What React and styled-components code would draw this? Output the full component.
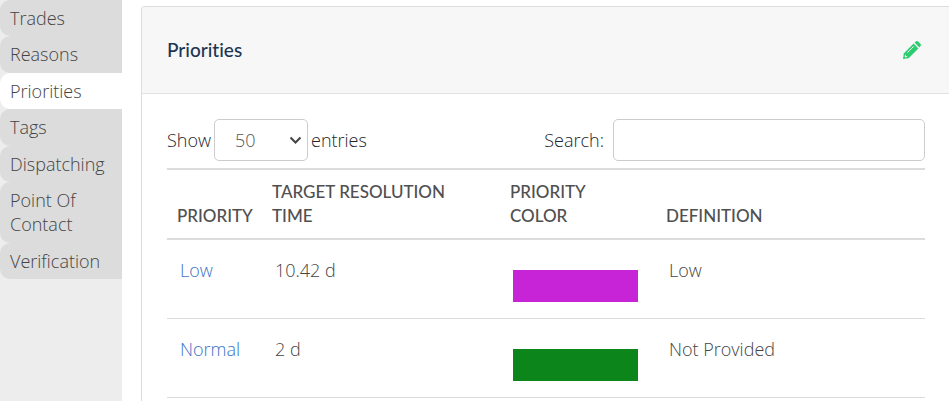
import React, {useState} from 'react';
import styled, {createGlobalStyle} from 'styled-components';

const headingFont = 'Lato, "Open Sans", sans-serif';
const line = '#dcdcdc';

const GlobalStyle = createGlobalStyle`
  *, *::before, *::after {
    box-sizing: border-box;
  }

  body {
    margin: 0;
    background: #fff;
    color: #444;
    font-family: "Open Sans", sans-serif;
    font-size: 18px;
    font-weight: 300;
    line-height: 24px;
  }
`;

const Layout = styled.div`
  display: grid;
  grid-template-columns: 122px minmax(0, 1fr);
  column-gap: 19px;
  min-height: 100vh;
`;

const Sidebar = styled.nav`
  background: #ededed;
`;

const Tab = styled.a`
  display: block;
  padding: 6px 10px;
  border-radius: 10px 0 0 10px;
  background: ${props => props.$active ? '#fff' : '#dcdcdc'};
  color: #444;
  text-decoration: none;

  &:nth-child(even) {
    padding-bottom: 7px;
  }
`;

const Card = styled.section`
  margin-top: 6px;
  border: solid ${line};
  border-width: 1px 0 0 1px;
  border-top-left-radius: 4px;
  overflow: hidden;
`;

const CardHeader = styled.header`
  display: flex;
  align-items: center;
  justify-content: space-between;
  height: 87px;
  padding: 0 28px 0 25px;
  border-bottom: 1px solid #e2e2e2;
  background: #f7f7f7;
`;

const CardTitle = styled.h1`
  margin: 0;
  color: #1d3553;
  font-family: ${headingFont};
  font-size: 19px;
  font-weight: 500;
  font-variant-ligatures: none;
`;

const EditButton = styled.button`
  display: flex;
  padding: 0;
  border: none;
  background: transparent;
  color: #2ecc71;
  cursor: pointer;
`;

const CardBody = styled.div`
  padding: 25px 24px 0 25px;
`;

const Controls = styled.div`
  display: flex;
  justify-content: space-between;
  margin-bottom: 7px;
  color: #212529;
`;

const LengthLabel = styled.label`
  display: flex;
  align-items: center;
  gap: 3px;
`;

const SearchLabel = styled(LengthLabel)`
  gap: 9px;
`;

const SelectWrapper = styled.span`
  position: relative;
  display: flex;

  svg {
    position: absolute;
    top: 17px;
    right: 6px;
    pointer-events: none;
  }
`;

const LengthSelect = styled.select`
  appearance: none;
  width: 94px;
  height: 42px;
  padding: 0 20px;
  border: 1px solid #ccc;
  border-radius: 5px;
  background: #fff;
  color: #555;
  font: inherit;
`;

const SearchInput = styled.input`
  width: 312px;
  height: 42px;
  padding: 0 12px;
  border: 1px solid #ccc;
  border-radius: 5px;
  color: #555;
  font: inherit;
`;

const Table = styled.table`
  width: 100%;
  border-collapse: separate;
  border-spacing: 0;
  table-layout: fixed;
`;

const HeadCell = styled.th`
  width: ${props => props.$width || 'auto'};
  padding: 10px;
  border: solid ${line};
  border-width: 2px 0;
  color: #505050;
  font-family: ${headingFont};
  font-size: 17px;
  font-weight: 500;
  text-align: left;
  text-transform: uppercase;
  vertical-align: bottom;
`;

const Cell = styled.td`
  padding: 18px 0 16px 13px;
  border-bottom: 1px solid ${line};
  vertical-align: top;
`;

const PriorityLink = styled.a`
  color: #3b73c5;
  text-decoration: none;
`;

const Swatch = styled.div`
  width: 125px;
  height: 32px;
  margin-top: 12px;
  background: ${props => props.$color};
`;

const tabs = ['Trades', 'Reasons', 'Priorities', 'Tags', 'Dispatching', 'Point Of Contact', 'Verification'];

const priorities = [
  {name: 'Low', time: '10.42 d', color: '#c724d8', definition: 'Low'},
  {name: 'Normal', time: '2 d', color: '#0c851b', definition: 'Not Provided'}
];

function PencilIcon() {
  return (
    <svg width="18" height="18" viewBox="0 0 18 18" fill="currentColor" aria-hidden="true">
      <path d="M10.6 2.6 15.4 7.4 5.6 17.2 0 18 .8 12.4z" />
      <path d="M11.6 1.6 12.8 .6Q14 -.4 15.2 .6L17.4 2.8Q18.4 4 17.4 5.2L16.4 6.4z" />
      <path d="M4.4 11.6 10.6 5.4" stroke="#f7f7f7" strokeWidth="1" />
      <path d="M2.3 13.2 3 15 4.8 15.7 2.6 16.4 1.6 15.4z" fill="#f7f7f7" />
    </svg>
  );
}

function ChevronIcon() {
  return (
    <svg width="13" height="9" viewBox="0 0 13 9" fill="none" stroke="#444" strokeWidth="2" aria-hidden="true">
      <path d="M1.5 1.5 6.5 6.5 11.5 1.5" />
    </svg>
  );
}

function TableControls({search, onSearch}) {
  const [length, setLength] = useState('50');

  return (
    <Controls>
      <LengthLabel>
        Show
        <SelectWrapper>
          <LengthSelect value={length} onChange={e => setLength(e.target.value)}>
            <option>10</option>
            <option>25</option>
            <option>50</option>
            <option>100</option>
          </LengthSelect>
          <ChevronIcon />
        </SelectWrapper>
        entries
      </LengthLabel>
      <SearchLabel>
        Search:
        <SearchInput type="search" value={search} onChange={e => onSearch(e.target.value)} />
      </SearchLabel>
    </Controls>
  );
}

export default function App() {
  const [active, setActive] = useState('Priorities');
  const [search, setSearch] = useState('');
  const rows = priorities.filter(p => p.name.toLowerCase().includes(search.toLowerCase()));

  return (
    <>
      <GlobalStyle />
      <Layout>
        <Sidebar>
          {tabs.map(tab => (
            <Tab key={tab} href="#" $active={tab === active} onClick={() => setActive(tab)}>{tab}</Tab>
          ))}
        </Sidebar>
        <Card>
          <CardHeader>
            <CardTitle>Priorities</CardTitle>
            <EditButton type="button" aria-label="Edit"><PencilIcon /></EditButton>
          </CardHeader>
          <CardBody>
            <TableControls search={search} onSearch={setSearch} />
            <Table>
              <thead>
                <tr>
                  <HeadCell $width="95px">Priority</HeadCell>
                  <HeadCell $width="238px">Target Resolution<br />Time</HeadCell>
                  <HeadCell $width="156px">Priority<br />Color</HeadCell>
                  <HeadCell>Definition</HeadCell>
                </tr>
              </thead>
              <tbody>
                {rows.map(row => (
                  <tr key={row.name}>
                    <Cell><PriorityLink href="#">{row.name}</PriorityLink></Cell>
                    <Cell>{row.time}</Cell>
                    <Cell><Swatch $color={row.color} /></Cell>
                    <Cell>{row.definition}</Cell>
                  </tr>
                ))}
              </tbody>
            </Table>
          </CardBody>
        </Card>
      </Layout>
    </>
  );
}
